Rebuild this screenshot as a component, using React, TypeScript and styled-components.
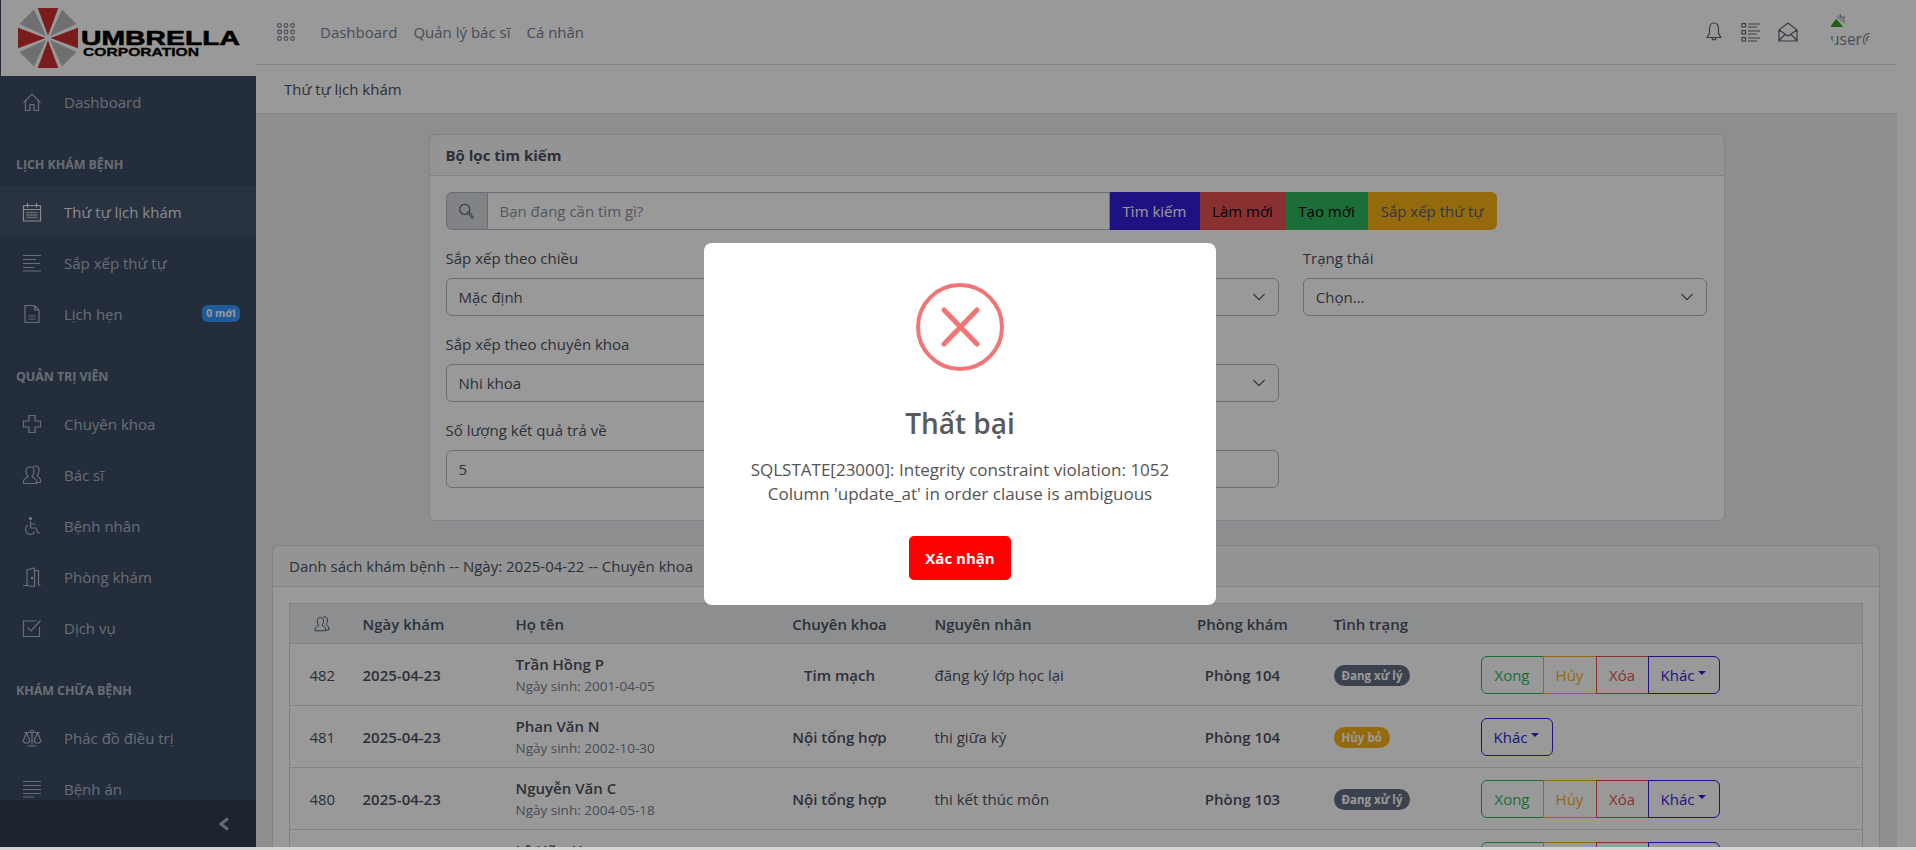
import React from "react";
import styled, { createGlobalStyle } from "styled-components";

const FONT = `"Open Sans", "Noto Sans", sans-serif`;

const GlobalStyle = createGlobalStyle`
  html, body {
    margin: 0;
    padding: 0;
    height: 100%;
    overflow: hidden;
    background: #fff;
  }
  body {
    font-family: ${FONT};
    font-size: 15px;
    color: #4a5160;
  }
  * { box-sizing: border-box; }
`;

const Icon = ({ size = 20, children }: { size?: number; children: React.ReactNode }) => (
  <svg width={size} height={size} viewBox="0 0 20 20" fill="none" stroke="currentColor" strokeWidth={1.2}>
    {children}
  </svg>
);

const HomeIcon = () => <Icon><path d="M1.5 10.5 10 2l8.500 8.500M3.500 9v9.500H8V12.500h4v6h4.500V9" /></Icon>;
const CalendarIcon = () => (
  <Icon>
    <path d="M1.500 3.500h17v15.500h-17zM5.500 1v4.500M14.500 1v4.500M1.500 7.500h17" />
    <path d="M4.500 10.500h11M4.500 13h11M4.500 15.500h11" strokeWidth={1.500} strokeDasharray="1.200 0.800" />
  </Icon>
);
const AlignIcon = () => <Icon><path d="M1 2.500h18M1 6.500h13M1 10.500h17M1 14.500h11M1 18h18" /></Icon>;
const FileIcon = () => <Icon><path d="M3 1.500h9.500L17 6v12.500H3zM12.500 1.500V6H17M6.500 12h7M6.500 15h7" /></Icon>;
const CrossIcon = () => <Icon><path d="M7 1.500h6V7h5.500v6H13v5.500H7V13H1.500V7H7z" /></Icon>;
const PeopleIcon = ({ size = 20 }: { size?: number }) => (
  <Icon size={size}>
    <path d="M1.500 18.500V16c0-2.300 3.500-3 4.500-4.500C4.700 10 4 8 4 6c0-2.500 1.600-4 4-4s4 1.500 4 4c0 2-.7 4-2 5.500 1 1.500 4.500 2.200 4.500 4.500v2.500z" />
    <path d="M11 1.500c.6-.3 1.300-.5 2-.5 2.400 0 4 1.500 4 4 0 2-.7 4-2 5.500 1 1.300 3.500 2 3.500 4.500v2.500h-3.500" />
  </Icon>
);
const ChairIcon = () => (
  <Icon>
    <circle cx="8.500" cy="2.500" r="1" fill="currentColor" />
    <path d="M8.500 5v7h5.500l2 5h2M8.500 8h5" />
    <path d="M6 9a5 5 0 1 0 7 6.500" />
  </Icon>
);
const DoorIcon = () => (
  <Icon>
    <path d="M1 18.500h4.500M5 18.500V3l7.500-2v18.500L5 18.500M12.500 3.500h4v14.500l2 .5" />
    <circle cx="10" cy="11" r=".6" fill="currentColor" />
  </Icon>
);
const CheckIcon = () => <Icon><path d="M17.500 9v9.500h-16V3h13M5.500 9.500 9 13 18.500 2.500" /></Icon>;
const ScaleIcon = () => (
  <Icon>
    <circle cx="10" cy="3.500" r="1.500" />
    <path d="M10 5v12M5.500 18h9M2.500 4.500h5.500M12 4.500h5.500" />
    <path d="M4.500 5 1.200 12.500a3.300 2.500 0 0 0 6.600 0zM15.500 5l-3.300 7.500a3.300 2.500 0 0 0 6.600 0z" />
  </Icon>
);
const JustifyIcon = () => <Icon><path d="M1 2.500h18M1 6.500h18M1 10.500h18M1 14.500h18M1 18h11" /></Icon>;
const SearchIcon = () => (
  <Icon size={17}>
    <circle cx="8" cy="7.500" r="6" />
    <path d="M12.500 11.500 17 17" strokeWidth={3} strokeLinecap="round" />
    <path d="M12.500 11.500 17 17" strokeWidth={1.200} stroke="#d8dbe0" strokeLinecap="round" />
  </Icon>
);
const AppsIcon = () => (
  <svg width="18" height="18" viewBox="0 0 18 18" fill="none" stroke="currentColor" strokeWidth={1.1}>
    {[2.500, 9, 15.500].map((y) =>
      [2.500, 9, 15.500].map((x) => <circle key={`${x}-${y}`} cx={x} cy={y} r="1.900" />),
    )}
  </svg>
);
const BellIcon = () => (
  <Icon>
    <path d="M10 1c-3 0-4.500 2.500-4.500 6v4.500L3 15.500h14l-2.500-4V7c0-3.500-1.500-6-4.500-6zM8 15.500c0 3.200 4 3.200 4 0" />
  </Icon>
);
const ListIcon = () => (
  <Icon>
    <path d="M1 1.500h3.500V5H1zM1 8.500h3.500V12H1zM1 15.500h3.500V19H1zM7 2h12M7 5h9M7 9h12M7 12h9M7 16h12M7 19h9" />
  </Icon>
);
const MailIcon = () => (
  <Icon>
    <path d="M1 8 10 1l9 7v11H1zM1 8l9 6 9-6M1 18.500l6.500-6.500M19 18.500 12.500 12" />
  </Icon>
);
const BrokenImage = () => (
  <svg width="16" height="16" viewBox="0 0 16 16">
    <path d="M5 1h6l4 4v7L5 5z" fill="#c5d0dc" />
    <path d="M10.500 .5V5H15" fill="#fff" stroke="#777" strokeWidth=".8" />
    <path d="M0 15 6 7l4 4 3 4z" fill="#3a9a2a" />
  </svg>
);
const ChevronIcon = () => (
  <svg width="14" height="14" viewBox="0 0 16 16" fill="none" stroke="currentColor" strokeWidth={1.5} strokeLinecap="round" strokeLinejoin="round">
    <path d="m2 5 6 6 6-6" />
  </svg>
);
const CollapseIcon = () => (
  <svg width="12" height="14" viewBox="0 0 12 14" fill="none" stroke="currentColor" strokeWidth={3}>
    <path d="M10 1.500 3 7l7 5.500" />
  </svg>
);
const ErrorCross = () => (
  <svg width="40" height="40" viewBox="0 0 40 40" fill="none" stroke="#f27474" strokeWidth={5} strokeLinecap="round">
    <path d="M4 3 37 37M37 3 4 37" />
  </svg>
);

const Logo = () => (
  <svg width="256" height="76" viewBox="0 0 256 76">
    <g transform="translate(47 38)">
      {[0, 45, 90, 135, 180, 225, 270, 315].map((a, i) => (
        <path
          key={a}
          d="M0 -2.500 L-10.300 -30 L10.300 -30 Z"
          transform={`rotate(${a})`}
          fill={i % 2 === 0 ? "#cc3030" : "#b9b9b9"}
        />
      ))}
    </g>
    <text x="80" y="45" fontFamily="Liberation Sans" fontWeight="700" fontSize="21" textLength="159" lengthAdjust="spacingAndGlyphs" stroke="#000" strokeWidth=".6">
      UMBRELLA
    </text>
    <text x="82" y="56" fontFamily="Liberation Sans" fontWeight="700" fontSize="11.500" textLength="116" lengthAdjust="spacingAndGlyphs" stroke="#000" strokeWidth=".3">
      CORPORATION
    </text>
  </svg>
);

type NavEntry =
  | { title: string }
  | { label: string; icon: React.ReactNode; active?: boolean; badge?: string };

const NAV: NavEntry[] = [
  { label: "Dashboard", icon: <HomeIcon /> },
  { title: "LỊCH KHÁM BỆNH" },
  { label: "Thứ tự lịch khám", icon: <CalendarIcon />, active: true },
  { label: "Sắp xếp thứ tự", icon: <AlignIcon /> },
  { label: "Lịch hẹn", icon: <FileIcon />, badge: "0 mới" },
  { title: "QUẢN TRỊ VIÊN" },
  { label: "Chuyên khoa", icon: <CrossIcon /> },
  { label: "Bác sĩ", icon: <PeopleIcon /> },
  { label: "Bệnh nhân", icon: <ChairIcon /> },
  { label: "Phòng khám", icon: <DoorIcon /> },
  { label: "Dịch vụ", icon: <CheckIcon /> },
  { title: "KHÁM CHỮA BỆNH" },
  { label: "Phác đồ điều trị", icon: <ScaleIcon /> },
  { label: "Bệnh án", icon: <JustifyIcon /> },
];

type Patient = {
  id: number;
  name: string;
  born: string;
  field: string;
  reason: string;
  room: string;
  status: "busy" | "cancelled";
};

const PATIENTS: Patient[] = [
  { id: 482, name: "Trần Hồng P", born: "2001-04-05", field: "Tim mạch", reason: "đăng ký lớp học lại", room: "Phòng 104", status: "busy" },
  { id: 481, name: "Phan Văn N", born: "2002-10-30", field: "Nội tổng hợp", reason: "thi giữa kỳ", room: "Phòng 104", status: "cancelled" },
  { id: 480, name: "Nguyễn Văn C", born: "2004-05-18", field: "Nội tổng hợp", reason: "thi kết thúc môn", room: "Phòng 103", status: "busy" },
  { id: 479, name: "Lê Hữu H", born: "2003-02-11", field: "Nội tổng hợp", reason: "khám định kỳ", room: "Phòng 103", status: "busy" },
];

const Page = styled.div`
  height: 850px;
  display: flex;
  flex-direction: column;
  overflow: hidden;
`;

const Main = styled.div`
  height: 847px;
  display: flex;
  overflow: hidden;
`;

const BottomStrip = styled.div`
  height: 3px;
  background: #d2d4d6;
`;

const Sidebar = styled.aside`
  width: 256px;
  flex: none;
  display: flex;
  flex-direction: column;
  background: #3c4b64;
  color: rgba(255, 255, 255, 0.6);
`;

const Brand = styled.div`
  height: 76px;
  flex: none;
  margin-left: 1px;
  background: #fff;
  overflow: hidden;
`;

const SideNav = styled.nav`
  flex: 1;
  min-height: 0;
  overflow: hidden;
`;

const SideTitle = styled.div`
  margin-top: 16px;
  padding: 12px 16px;
  height: 43px;
  font-size: 12.500px;
  line-height: 19px;
  font-weight: 700;
  letter-spacing: -0.1px;
`;

const SideItem = styled.div<{ $active?: boolean }>`
  height: 51px;
  padding: 0 16px 0 22px;
  display: flex;
  align-items: center;
  gap: 22px;
  background: ${(p) => (p.$active ? "rgba(255, 255, 255, 0.05)" : "transparent")};
  color: ${(p) => (p.$active ? "rgba(255, 255, 255, 0.87)" : "rgba(255, 255, 255, 0.6)")};
`;

const SideBadge = styled.span`
  margin-left: auto;
  width: 38px;
  height: 17px;
  border-radius: 6px;
  background: #39f;
  color: #fff;
  font-size: 10.500px;
  line-height: 17px;
  font-weight: 700;
  text-align: center;
`;

const SideFooter = styled.div`
  height: 47px;
  flex: none;
  display: flex;
  align-items: center;
  justify-content: flex-end;
  padding-right: 26px;
  background: #303c50;
`;

const Wrapper = styled.div`
  flex: 1;
  min-width: 0;
  display: flex;
  flex-direction: column;
  background: #ebedef;
`;

const Gutter = styled.div`
  width: 19px;
  flex: none;
  background: #fff;
`;

const TopBar = styled.header`
  height: 65px;
  flex: none;
  display: flex;
  align-items: center;
  padding: 0 0 1px 21px;
  background: #fff;
  border-bottom: 1px solid #d8dbe0;
  color: #768192;
`;

const TopLink = styled.span`
  padding: 0 8px;
  &:first-of-type {
    margin-left: 17px;
  }
`;

const TopIcons = styled.div`
  margin-left: auto;
  display: flex;
  align-items: center;
  gap: 17px;
  color: #5c6573;
`;

const Avatar = styled.div`
  width: 40px;
  height: 40px;
  margin: 0 27px 0 15px;
  border-radius: 50%;
  overflow: hidden;
  font-size: 15.500px;
  line-height: 22px;
  color: #768192;
  white-space: nowrap;
  svg {
    display: block;
  }
`;

const Breadcrumb = styled.div`
  height: 49px;
  flex: none;
  padding: 0 28px;
  display: flex;
  align-items: center;
  background: #fff;
  border-bottom: 1px solid #d8dbe0;
`;

const Body = styled.main`
  flex: 1;
  min-height: 0;
  overflow: hidden;
  padding: 20px 17px 0;
`;

const Card = styled.section`
  background: #fff;
  border: 1px solid #d8dbe0;
  border-radius: 6px;
`;

const FilterCard = styled(Card)`
  width: 1296px;
  margin: 0 auto 24px;
`;

const CardHeader = styled.div<{ $bold?: boolean }>`
  height: 41px;
  padding: 0 16px;
  display: flex;
  align-items: center;
  background: rgba(0, 0, 21, 0.03);
  border-bottom: 1px solid #d8dbe0;
  font-weight: ${(p) => (p.$bold ? 700 : 400)};
`;

const CardBody = styled.div`
  padding: 16px;
`;

const SearchGroup = styled.div`
  width: 1051px;
  height: 38px;
  margin-bottom: 16px;
  display: flex;
`;

const SearchAddon = styled.div`
  width: 42px;
  flex: none;
  display: flex;
  align-items: center;
  justify-content: center;
  background: #d8dbe0;
  border: 1px solid #b1b7c1;
  border-radius: 6px 0 0 6px;
`;

const SearchInput = styled.div`
  flex: 1;
  display: flex;
  align-items: center;
  padding-left: 12px;
  border: 1px solid #b1b7c1;
  border-left: 0;
  color: #8a93a2;
`;

const SearchButton = styled.div<{ $w: number; $bg: string; $fg: string; $end?: boolean }>`
  width: ${(p) => p.$w}px;
  flex: none;
  display: flex;
  align-items: center;
  justify-content: center;
  background: ${(p) => p.$bg};
  color: ${(p) => p.$fg};
  border-radius: ${(p) => (p.$end ? "0 6px 6px 0" : "0")};
`;

const FilterGrid = styled.div`
  display: grid;
  grid-template-columns: repeat(3, 1fr);
  gap: 16px 24px;
  margin-bottom: 16px;
`;

const Field = styled.div`
  display: flex;
  flex-direction: column;
  gap: 8px;
`;

const FieldLabel = styled.div`
  height: 24px;
  line-height: 24px;
`;

const Control = styled.div`
  height: 38px;
  display: flex;
  align-items: center;
  justify-content: space-between;
  padding: 0 12px;
  border: 1px solid #b1b7c1;
  border-radius: 6px;
`;

const TableCard = styled(Card)`
  margin-left: -1px;
  border-bottom: 0;
`;

const Table = styled.table`
  width: 100%;
  table-layout: fixed;
  border-collapse: collapse;
  border: 1px solid #d8dbe0;
`;

const Th = styled.th<{ $w?: number; $center?: boolean }>`
  width: ${(p) => (p.$w ? `${p.$w}px` : "auto")};
  height: 40px;
  padding: 0 8px;
  background: #ebedef;
  border-bottom: 1px solid #d8dbe0;
  font-weight: 600;
  font-size: 15px;
  text-align: ${(p) => (p.$center ? "center" : "left")};
  svg {
    display: block;
    margin: 0 auto;
  }
`;

const Td = styled.td<{ $center?: boolean; $weight?: number }>`
  height: 62px;
  padding: 0 8px;
  border-bottom: 1px solid #d8dbe0;
  text-align: ${(p) => (p.$center ? "center" : "left")};
  font-weight: ${(p) => p.$weight ?? 400};
`;

const PatientName = styled.div`
  font-weight: 600;
  line-height: 24px;
`;

const PatientBorn = styled.div`
  font-size: 13.500px;
  line-height: 21px;
  font-weight: 500;
  color: #768192;
`;

const StatusPill = styled.span<{ $tone: "busy" | "cancelled" }>`
  display: inline-block;
  height: 21px;
  padding: 0 8px;
  border-radius: 11px;
  background: ${(p) => (p.$tone === "busy" ? "#636f83" : "#f9b115")};
  color: #fff;
  font-size: 11.500px;
  line-height: 21px;
  font-weight: 700;
`;

const ActionGroup = styled.div`
  display: flex;
  height: 38px;
  margin-left: 0;
`;

const ActionButton = styled.div<{ $w: number; $color: string }>`
  width: ${(p) => p.$w}px;
  display: flex;
  align-items: center;
  justify-content: center;
  gap: 4px;
  margin-right: -1px;
  border: 1px solid ${(p) => p.$color};
  color: ${(p) => p.$color};
  &:first-child {
    border-radius: 6px 0 0 6px;
  }
  &:last-child {
    border-radius: 0 6px 6px 0;
    margin-right: 0;
  }
  &:only-child {
    border-radius: 6px;
  }
`;

const Caret = styled.span`
  width: 0;
  height: 0;
  margin-bottom: 3px;
  border-top: 4px solid currentColor;
  border-left: 4px solid transparent;
  border-right: 4px solid transparent;
`;

const Overlay = styled.div`
  position: fixed;
  left: 0;
  top: 0;
  width: 1916px;
  height: 847px;
  padding-left: 4px;
  display: flex;
  align-items: center;
  justify-content: center;
  background: rgba(0, 0, 0, 0.4);
`;

const Modal = styled.div`
  width: 512px;
  height: 362px;
  padding-top: 40px;
  display: flex;
  flex-direction: column;
  align-items: center;
  background: #fff;
  border-radius: 8px;
`;

const ModalIcon = styled.div`
  width: 88px;
  height: 88px;
  flex: none;
  display: flex;
  align-items: center;
  justify-content: center;
  border: 4px solid #f27474;
  border-radius: 50%;
`;

const ModalTitle = styled.h2`
  margin: 33px 0 0;
  font-size: 28px;
  line-height: 38px;
  font-weight: 600;
  color: #595959;
`;

const ModalText = styled.div`
  margin-top: 16px;
  font-size: 17px;
  line-height: 24.500px;
  color: #545454;
  text-align: center;
`;

const ConfirmButton = styled.div`
  margin-top: 29px;
  width: 102px;
  height: 44px;
  display: flex;
  align-items: center;
  justify-content: center;
  border-radius: 5px;
  background: #f00;
  color: #fff;
  font-weight: 700;
  font-size: 15px;
`;

const Actions = ({ status }: { status: Patient["status"] }) => (
  <ActionGroup>
    {status === "busy" && (
      <>
        <ActionButton $w={63} $color="#2eb85c">Xong</ActionButton>
        <ActionButton $w={54} $color="#f9b115">Hủy</ActionButton>
        <ActionButton $w={53} $color="#e55353">Xóa</ActionButton>
      </>
    )}
    <ActionButton $w={72} $color="#321fdb">
      Khác <Caret />
    </ActionButton>
  </ActionGroup>
);

export default function App() {
  return (
    <>
      <GlobalStyle />
      <Page>
        <Main>
          <Sidebar>
            <Brand>
              <Logo />
            </Brand>
            <SideNav>
              {NAV.map((entry) =>
                "title" in entry ? (
                  <SideTitle key={entry.title}>{entry.title}</SideTitle>
                ) : (
                  <SideItem key={entry.label} $active={entry.active}>
                    {entry.icon}
                    {entry.label}
                    {entry.badge && <SideBadge>{entry.badge}</SideBadge>}
                  </SideItem>
                ),
              )}
            </SideNav>
            <SideFooter>
              <CollapseIcon />
            </SideFooter>
          </Sidebar>
          <Wrapper>
            <TopBar>
              <AppsIcon />
              <TopLink>Dashboard</TopLink>
              <TopLink>Quản lý bác sĩ</TopLink>
              <TopLink>Cá nhân</TopLink>
              <TopIcons>
                <BellIcon />
                <ListIcon />
                <MailIcon />
                <Avatar>
                  <BrokenImage />
                  user@gmail.com
                </Avatar>
              </TopIcons>
            </TopBar>
            <Breadcrumb>Thứ tự lịch khám</Breadcrumb>
            <Body>
              <FilterCard>
                <CardHeader $bold>Bộ lọc tìm kiếm</CardHeader>
                <CardBody>
                  <SearchGroup>
                    <SearchAddon>
                      <SearchIcon />
                    </SearchAddon>
                    <SearchInput>Bạn đang cần tìm gì?</SearchInput>
                    <SearchButton $w={90} $bg="#321fdb" $fg="#fff">Tìm kiếm</SearchButton>
                    <SearchButton $w={86} $bg="#e55353" $fg="#000015">Làm mới</SearchButton>
                    <SearchButton $w={82} $bg="#2eb85c" $fg="#000015">Tạo mới</SearchButton>
                    <SearchButton $w={129} $bg="#f9b115" $fg="#4f5d73" $end>Sắp xếp thứ tự</SearchButton>
                  </SearchGroup>
                  <FilterGrid>
                    <Field>
                      <FieldLabel>Sắp xếp theo chiều</FieldLabel>
                      <Control>Mặc định</Control>
                    </Field>
                    <Field>
                      <FieldLabel />
                      <Control>
                        <span />
                        <ChevronIcon />
                      </Control>
                    </Field>
                    <Field>
                      <FieldLabel>Trạng thái</FieldLabel>
                      <Control>
                        Chọn...
                        <ChevronIcon />
                      </Control>
                    </Field>
                    <Field>
                      <FieldLabel>Sắp xếp theo chuyên khoa</FieldLabel>
                      <Control>Nhi khoa</Control>
                    </Field>
                    <Field>
                      <FieldLabel />
                      <Control>
                        <span />
                        <ChevronIcon />
                      </Control>
                    </Field>
                    <span />
                    <Field>
                      <FieldLabel>Số lượng kết quả trả về</FieldLabel>
                      <Control>5</Control>
                    </Field>
                    <Field>
                      <FieldLabel />
                      <Control />
                    </Field>
                  </FilterGrid>
                </CardBody>
              </FilterCard>
              <TableCard>
                <CardHeader>Danh sách khám bệnh -- Ngày: 2025-04-22 -- Chuyên khoa</CardHeader>
                <CardBody>
                  <Table>
                    <thead>
                      <tr>
                        <Th $w={65} $center>
                          <PeopleIcon size={16} />
                        </Th>
                        <Th $w={153}>Ngày khám</Th>
                        <Th $w={245}>Họ tên</Th>
                        <Th $w={174} $center>Chuyên khoa</Th>
                        <Th $w={233}>Nguyên nhân</Th>
                        <Th $w={166} $center>Phòng khám</Th>
                        <Th $w={147}>Tình trạng</Th>
                        <Th />
                      </tr>
                    </thead>
                    <tbody>
                      {PATIENTS.map((p) => (
                        <tr key={p.id}>
                          <Td $center>{p.id}</Td>
                          <Td $weight={600}>2025-04-23</Td>
                          <Td>
                            <PatientName>{p.name}</PatientName>
                            <PatientBorn>Ngày sinh: {p.born}</PatientBorn>
                          </Td>
                          <Td $center $weight={600}>{p.field}</Td>
                          <Td $weight={500}>{p.reason}</Td>
                          <Td $center $weight={600}>{p.room}</Td>
                          <Td>
                            <StatusPill $tone={p.status}>
                              {p.status === "busy" ? "Đang xử lý" : "Hủy bỏ"}
                            </StatusPill>
                          </Td>
                          <Td>
                            <Actions status={p.status} />
                          </Td>
                        </tr>
                      ))}
                    </tbody>
                  </Table>
                </CardBody>
              </TableCard>
            </Body>
          </Wrapper>
          <Gutter />
        </Main>
        <BottomStrip />
        <Overlay>
          <Modal>
            <ModalIcon>
              <ErrorCross />
            </ModalIcon>
            <ModalTitle>Thất bại</ModalTitle>
            <ModalText>
              SQLSTATE[23000]: Integrity constraint violation: 1052
              <br />
              Column 'update_at' in order clause is ambiguous
            </ModalText>
            <ConfirmButton>Xác nhận</ConfirmButton>
          </Modal>
        </Overlay>
      </Page>
    </>
  );
}
